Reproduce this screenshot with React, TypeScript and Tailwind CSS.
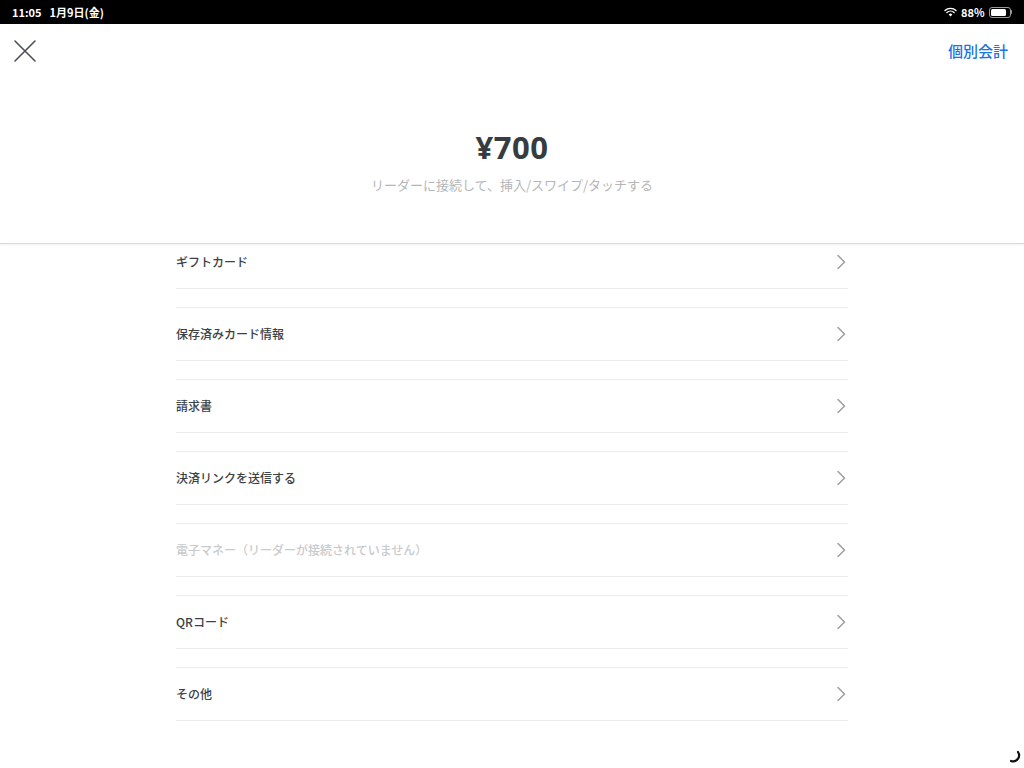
import React from "react";

const items = [
  { label: "ギフトカード", disabled: false },
  { label: "保存済みカード情報", disabled: false },
  { label: "請求書", disabled: false },
  { label: "決済リンクを送信する", disabled: false },
  { label: "電子マネー（リーダーが接続されていません）", disabled: true },
  { label: "QRコード", disabled: false },
  { label: "その他", disabled: false },
];

const font = { fontFamily: '"Noto Sans CJK JP", "Noto Sans", sans-serif' };

function Chevron() {
  return (
    <svg width="10" height="16" viewBox="0 0 10 16" fill="none">
      <path d="M2 1.5 L8.5 8 L2 14.5" stroke="#9a9a9e" strokeWidth="1.4" strokeLinecap="round" strokeLinejoin="round" />
    </svg>
  );
}

export default function App() {
  return (
    <div className="relative w-[1024px] h-[768px] overflow-hidden bg-white flex flex-col" style={font}>
      {/* status bar */}
      <div className="h-[24px] bg-black flex items-center justify-between px-[12px] text-white text-[11px] font-semibold">
        <div className="flex items-center gap-[8px]">
          <span>11:05</span>
          <span>1月9日(金)</span>
        </div>
        <div className="flex items-center gap-[4px]">
          <svg width="13" height="10" viewBox="0 0 13 10">
            <path d="M6.5 9.5 L4.6 7.4 A2.8 2.8 0 0 1 8.4 7.4 Z" fill="white" />
            <path d="M2.9 5.6 A5.2 5.2 0 0 1 10.1 5.6" stroke="white" strokeWidth="1.4" fill="none" strokeLinecap="round" />
            <path d="M1 3.6 A7.8 7.8 0 0 1 12 3.6" stroke="white" strokeWidth="1.4" fill="none" strokeLinecap="round" />
          </svg>
          <span>88%</span>
          <div className="flex items-center">
            <div className="w-[22px] h-[11px] rounded-[3px] border border-[#9a9a9a] p-[1px]">
              <div className="h-full w-[88%] bg-white rounded-[1.5px]" />
            </div>
            <div className="w-[1.5px] h-[4px] bg-[#9a9a9a] rounded-r-sm" />
          </div>
        </div>
      </div>

      {/* header */}
      <div className="h-[220px] flex flex-col border-b border-[#dadada] shadow-[0_1px_2px_rgba(0,0,0,0.06)] z-10 bg-white">
        <div className="h-[54px] flex items-center justify-between pl-[14px] pr-[16px]">
          <svg width="22" height="22" viewBox="0 0 22 22">
            <path d="M1 1 L21 21 M21 1 L1 21" stroke="#4a4f54" strokeWidth="1.6" strokeLinecap="round" />
          </svg>
          <span className="text-[15px] text-[#1a73e8] font-medium">個別会計</span>
        </div>
        <div className="mt-[51px] text-center text-[31px] leading-[36px] font-bold text-[#373c41] tracking-[0.5px]" style={{ fontFamily: '"Open Sans", "Noto Sans CJK JP", sans-serif' }}>
          ¥700
        </div>
        <div className="mt-[10px] text-center text-[13px] leading-[20px] text-[#b4b6b8]">
          リーダーに接続して、挿入/スワイプ/タッチする
        </div>
      </div>

      {/* list */}
      <div className="flex-1 overflow-hidden">
        <div className="mt-[-9px] w-[672px] ml-[176px] flex flex-col gap-[18px]">
          {items.map((it) => (
            <div key={it.label} className="h-[54px] border-y border-[#ececec] flex items-center justify-between pr-[2px]">
              <span className={`text-[12px] font-medium ${it.disabled ? "text-[#c9cacb]" : "text-[#3c4146]"}`}>{it.label}</span>
              <Chevron />
            </div>
          ))}
        </div>
      </div>

      {/* spinner */}
      <svg className="absolute right-[3px] bottom-[5px]" width="14" height="14" viewBox="0 0 14 14">
        <path d="M11 3 A6 6 0 0 1 4 12" stroke="#111" strokeWidth="2.2" fill="none" strokeLinecap="round" />
      </svg>
    </div>
  );
}
